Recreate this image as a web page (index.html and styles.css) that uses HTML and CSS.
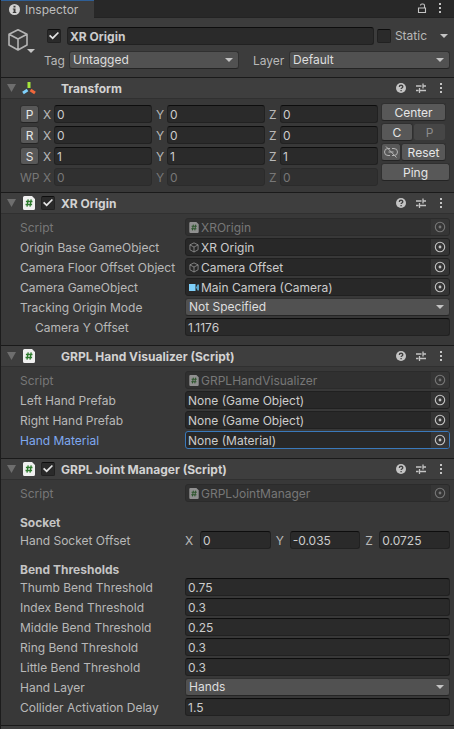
FILE: index.html
```html
<!DOCTYPE html>
<html lang="en">
<head>
<meta charset="utf-8">
<title>Inspector</title>
<link rel="stylesheet" href="styles.css">
</head>
<body>
<svg class="defs" aria-hidden="true">
  <symbol id="cube" viewBox="0 0 22 24"><path d="M11 1.8 20 6.2V17L11 22 2 17V6.2ZM2 6.2 11 11l9-4.8M11 11v11" fill="none" stroke="currentColor" stroke-width="1.600" stroke-linejoin="round"/></symbol>
  <symbol id="script" viewBox="0 0 12 14"><path d="M1.500 0H9l3 3v9.500a1.500 1.500 0 0 1-1.500 1.500h-9A1.500 1.500 0 0 1 0 12.500v-11A1.500 1.500 0 0 1 1.500 0Z" fill="#f0f0f0"/><path d="M5.200 3.300 4 10.700M8.200 3.300 7 10.700M2.900 5.500h6.600M2.500 8.500h6.600" fill="none" stroke="#2c7a2c" stroke-width="1.300"/></symbol>
  <symbol id="help" viewBox="0 0 10 10"><circle cx="5" cy="5" r="5" fill="currentColor"/><path d="M3.300 3.900c0-2.200 3.500-2.200 3.500-.1 0 1.200-1.700 1.200-1.700 2.300M5.100 7v1.200" fill="none" stroke="#3e3e3e" stroke-width="1.300"/></symbol>
  <symbol id="preset" viewBox="0 0 12 10"><path d="M1 3h5.500M8 3h3M8 .5v5M1 7.500h2.500M5 7.500h6M4.500 5v5" fill="none" stroke="currentColor" stroke-width="1.300"/></symbol>
  <symbol id="dots" viewBox="0 0 4 10"><path d="M1 0h2v2H1zM1 4h2v2H1zM1 8h2v2H1z" fill="currentColor"/></symbol>
  <symbol id="pick" viewBox="0 0 12 12"><circle cx="6" cy="6" r="4.700" fill="none" stroke="currentColor" stroke-width="1.100"/><circle cx="6" cy="6" r="1.400" fill="currentColor"/></symbol>
  <symbol id="camera" viewBox="0 0 10 10"><path d="M0 1.500h6.500v7H0z" fill="#7fd0fa"/><path d="M7 5 8.500 2H10v6H8.500Z" fill="#5aa5cc"/></symbol>
</svg>

<main class="panel">
  <nav class="tabs">
    <a class="tab" href="#inspector"><svg class="i11" viewBox="0 0 11 11"><circle cx="5.500" cy="5.500" r="5.500" fill="#d2d2d2"/><path d="M4.500 1.800h2v1.700h-2zM3.800 4.600h2.700v3.300h.8V9H3.800V7.900h.8V5.600h-.8Z" fill="#3c3c3c"/></svg>Inspector</a>
    <div class="tools tab-tools">
      <button class="tool" aria-label="Lock"><svg class="i10" viewBox="0 0 10 10"><path d="M1.500 5h7v4.500h-7ZM7.500 5V2.500a1.500 1.500 0 0 0-1.500-1.500H5a1.500 1.500 0 0 0-1.500 1.500" fill="none" stroke="currentColor" stroke-width="1.100"/></svg></button>
      <button class="tool" aria-label="Tab menu"><svg class="dots"><use href="#dots"/></svg></button>
    </div>
  </nav>

  <header class="object" id="inspector">
    <button class="object-icon" aria-label="Choose icon"><svg class="big-cube"><use href="#cube"/></svg></button>
    <div class="object-rows">
      <div class="object-row">
        <input class="check" type="checkbox" checked aria-label="Active">
        <input class="text name" type="text" value="XR Origin" aria-label="Name">
        <label class="static"><input class="check" type="checkbox">Static</label>
        <button class="static-menu" aria-label="Static flags"></button>
      </div>
      <div class="object-row tags">
        <label for="tag">Tag</label>
        <div class="drop tag-drop"><select id="tag"><option>Untagged</option></select></div>
        <label class="layer-label" for="layer">Layer</label>
        <div class="drop"><select id="layer"><option>Default</option></select></div>
      </div>
    </div>
  </header>

  <section>
    <div class="head">
      <button class="fold" aria-label="Collapse"></button>
      <svg class="head-icon axes" viewBox="0 0 14 14"><path d="M7 7V1" stroke="#a5e63c" stroke-width="3"/><path d="M5.500 9 1 12" stroke="#7fd0fa" stroke-width="3"/><path d="M8.500 9 13 12" stroke="#f0683c" stroke-width="3"/></svg>
      <h2>Transform</h2>
      <div class="tools"><button class="tool" aria-label="Help"><svg class="i10"><use href="#help"/></svg></button><button class="tool" aria-label="Presets"><svg class="preset"><use href="#preset"/></svg></button><button class="tool" aria-label="Menu"><svg class="dots"><use href="#dots"/></svg></button></div>
    </div>
    <div class="transform">
      <div class="vectors">
        <div class="vector"><button class="btn">P</button><label for="px">X</label><input class="text" id="px" value="0"><label for="py">Y</label><input class="text" id="py" value="0"><label for="pz">Z</label><input class="text" id="pz" value="0"></div>
        <div class="vector"><button class="btn">R</button><label for="rx">X</label><input class="text" id="rx" value="0"><label for="ry">Y</label><input class="text" id="ry" value="0"><label for="rz">Z</label><input class="text" id="rz" value="0"></div>
        <div class="vector"><button class="btn">S</button><label for="sx">X</label><input class="text" id="sx" value="1"><label for="sy">Y</label><input class="text" id="sy" value="1"><label for="sz">Z</label><input class="text" id="sz" value="1"></div>
        <div class="vector off"><span>WP</span><label for="wx">X</label><input class="text" id="wx" value="0" disabled><label for="wy">Y</label><input class="text" id="wy" value="0" disabled><label for="wz">Z</label><input class="text" id="wz" value="0" disabled></div>
      </div>
      <div class="actions">
        <div class="action"><button class="btn">Center</button></div>
        <div class="action halves"><button class="btn">C</button><button class="btn" disabled>P</button></div>
        <div class="action link"><button class="btn" aria-label="Unlink scale"><svg class="unlink" viewBox="0 0 14 12"><path d="M6 2.500H4a3.500 3.500 0 0 0 0 7h2M8 2.500h2a3.500 3.500 0 0 1 0 7H8M4.500 6h5M2 .5l10.500 11" fill="none" stroke="currentColor" stroke-width="1"/></svg></button><button class="btn">Reset</button></div>
        <div class="action wide"><button class="btn">Ping</button></div>
      </div>
    </div>
  </section>

  <section>
    <div class="head">
      <button class="fold" aria-label="Collapse"></button>
      <svg class="head-icon"><use href="#script"/></svg>
      <input class="check" type="checkbox" checked aria-label="Enable XR Origin">
      <h2>XR Origin</h2>
      <div class="tools"><button class="tool" aria-label="Help"><svg class="i10"><use href="#help"/></svg></button><button class="tool" aria-label="Presets"><svg class="preset"><use href="#preset"/></svg></button><button class="tool" aria-label="Menu"><svg class="dots"><use href="#dots"/></svg></button></div>
    </div>
    <div class="body">
      <div class="row off"><label for="o1">Script</label><div class="ref"><svg class="ref-icon"><use href="#script"/></svg><input id="o1" value="XROrigin" disabled><button aria-label="Select" disabled><svg class="pick"><use href="#pick"/></svg></button></div></div>
      <div class="row"><label for="o2">Origin Base GameObject</label><div class="ref"><svg class="ref-icon"><use href="#cube"/></svg><input id="o2" value="XR Origin" readonly><button aria-label="Select"><svg class="pick"><use href="#pick"/></svg></button></div></div>
      <div class="row"><label for="o3">Camera Floor Offset Object</label><div class="ref"><svg class="ref-icon"><use href="#cube"/></svg><input id="o3" value="Camera Offset" readonly><button aria-label="Select"><svg class="pick"><use href="#pick"/></svg></button></div></div>
      <div class="row"><label for="o4">Camera GameObject</label><div class="ref"><svg class="ref-icon"><use href="#camera"/></svg><input id="o4" value="Main Camera (Camera)" readonly><button aria-label="Select"><svg class="pick"><use href="#pick"/></svg></button></div></div>
      <div class="row"><label for="o5">Tracking Origin Mode</label><div class="drop"><select id="o5"><option>Not Specified</option></select></div></div>
      <div class="row"><label class="nested" for="o6">Camera Y Offset</label><input class="text" id="o6" value="1.1176"></div>
    </div>
  </section>

  <section>
    <div class="head">
      <button class="fold" aria-label="Collapse"></button>
      <svg class="head-icon"><use href="#script"/></svg>
      <h2>GRPL Hand Visualizer (Script)</h2>
      <div class="tools"><button class="tool" aria-label="Help"><svg class="i10"><use href="#help"/></svg></button><button class="tool" aria-label="Presets"><svg class="preset"><use href="#preset"/></svg></button><button class="tool" aria-label="Menu"><svg class="dots"><use href="#dots"/></svg></button></div>
    </div>
    <div class="body">
      <div class="row off"><label for="h1">Script</label><div class="ref"><svg class="ref-icon"><use href="#script"/></svg><input id="h1" value="GRPLHandVisualizer" disabled><button aria-label="Select" disabled><svg class="pick"><use href="#pick"/></svg></button></div></div>
      <div class="row"><label for="h2">Left Hand Prefab</label><div class="ref"><input id="h2" value="None (Game Object)" readonly><button aria-label="Select"><svg class="pick"><use href="#pick"/></svg></button></div></div>
      <div class="row"><label for="h3">Right Hand Prefab</label><div class="ref"><input id="h3" value="None (Game Object)" readonly><button aria-label="Select"><svg class="pick"><use href="#pick"/></svg></button></div></div>
      <div class="row active"><label for="h4">Hand Material</label><div class="ref"><input id="h4" value="None (Material)" readonly><button aria-label="Select"><svg class="pick"><use href="#pick"/></svg></button></div></div>
    </div>
  </section>

  <section>
    <div class="head">
      <button class="fold" aria-label="Collapse"></button>
      <svg class="head-icon"><use href="#script"/></svg>
      <input class="check" type="checkbox" checked aria-label="Enable GRPL Joint Manager">
      <h2>GRPL Joint Manager (Script)</h2>
      <div class="tools"><button class="tool" aria-label="Help"><svg class="i10"><use href="#help"/></svg></button><button class="tool" aria-label="Presets"><svg class="preset"><use href="#preset"/></svg></button><button class="tool" aria-label="Menu"><svg class="dots"><use href="#dots"/></svg></button></div>
    </div>
    <div class="body">
      <div class="row off"><label for="j1">Script</label><div class="ref"><svg class="ref-icon"><use href="#script"/></svg><input id="j1" value="GRPLJointManager" disabled><button aria-label="Select" disabled><svg class="pick"><use href="#pick"/></svg></button></div></div>
      <h3>Socket</h3>
      <div class="row"><span class="label">Hand Socket Offset</span><div class="triple"><label for="jx">X</label><input class="text" id="jx" value="0"><label for="jy">Y</label><input class="text" id="jy" value="-0.035"><label for="jz">Z</label><input class="text" id="jz" value="0.0725"></div></div>
      <h3>Bend Thresholds</h3>
      <div class="row"><label for="b1">Thumb Bend Threshold</label><input class="text" id="b1" value="0.75"></div>
      <div class="row"><label for="b2">Index Bend Threshold</label><input class="text" id="b2" value="0.3"></div>
      <div class="row"><label for="b3">Middle Bend Threshold</label><input class="text" id="b3" value="0.25"></div>
      <div class="row"><label for="b4">Ring Bend Threshold</label><input class="text" id="b4" value="0.3"></div>
      <div class="row"><label for="b5">Little Bend Threshold</label><input class="text" id="b5" value="0.3"></div>
      <div class="row"><label for="b6">Hand Layer</label><div class="drop"><select id="b6"><option>Hands</option></select></div></div>
      <div class="row"><label for="b7">Collider Activation Delay</label><input class="text" id="b7" value="1.5"></div>
    </div>
  </section>
  <div class="end"></div>
</main>
</body>
</html>
```
FILE: styles.css
```css
* { box-sizing: border-box; }

body {
  margin: 0;
  background: #383838;
  color: #b8b8b8;
  font: 12px/18px Inter, "Liberation Sans", sans-serif;
}

button, input, select {
  margin: 0;
  padding: 0;
  border: 0;
  background: none;
  color: inherit;
  font: inherit;
  min-width: 0;
  outline: 0;
}

svg { display: block; flex: none; }
.defs { position: absolute; width: 0; height: 0; }

.panel {
  display: flex;
  flex-direction: column;
  min-height: 100vh;
  border-left: 1px solid #1c1c1c;
}

/* Tab bar */
.tabs {
  display: flex;
  justify-content: space-between;
  height: 18px;
  background: #282828;
  box-shadow: inset 0 -1px #232323;
}
.tab {
  display: flex;
  align-items: center;
  gap: 5px;
  width: 93px;
  padding-left: 8px;
  border-top: 1px solid #2f5f96;
  background: #3c3c3c;
  color: #bebebe;
  text-decoration: none;
}
.i10 { width: 10px; height: 10px; }
.i11 { width: 11px; height: 11px; }
.preset { width: 12px; height: 10px; }
.dots { width: 4px; height: 10px; }
.pick { width: 12px; height: 12px; }
.unlink { width: 14px; height: 12px; }

.tools { display: flex; align-items: center; margin-left: auto; padding-right: 3px; color: #c4c4c4; }
.tool { display: grid; place-items: center; width: 20px; height: 18px; }
.tab-tools .tool { width: 18px; height: 16px; }
.tab-tools { align-items: flex-start; padding-right: 5px; }

/* Game object header */
.object {
  display: flex;
  gap: 8px;
  padding: 9px 4px 8px 6px;
  background: #3c3c3c;
}
.object-icon {
  position: relative;
  width: 24px;
  height: 26px;
  color: #b4b4b4;
}
.big-cube { width: 22px; height: 24px; }
.object-icon::after,
.static-menu::after,
.drop::after {
  content: "";
  width: 8px;
  height: 4px;
  background: #c4c4c4;
  clip-path: polygon(0 0, 100% 0, 50% 100%);
}
.object-icon::after { position: absolute; left: 20px; top: 22px; }
.object-rows { flex: 1; display: grid; gap: 6px; padding-left: 5px; }
.object-row { display: flex; align-items: center; padding-left: 3px; }
.object-row.tags { padding-left: 0; }
.tags > label { width: 25px; line-height: 20px; height: 18px; }
.tags > .layer-label { width: 36px; margin-left: 14px; }
.tags .drop { flex: 161; }
.tags .tag-drop { flex: 170; }
.name { flex: 1; margin: 0 3px 0 6px; font-weight: 700; }
.static { display: flex; align-items: center; gap: 4px; }
.static-menu { display: grid; place-items: center; width: 12px; height: 18px; margin-left: 11px; }

/* Shared controls */
.check {
  appearance: none;
  display: grid;
  place-items: center;
  flex: none;
  width: 14px;
  height: 14px;
  border: 1px solid #212121;
  border-top-color: #0d0d0d;
  border-radius: 2px;
  background: #2a2a2a;
}
.check:checked::before {
  content: "";
  width: 10px;
  height: 8px;
  background: #e4e4e4;
  clip-path: polygon(0 50%, 12% 34%, 36% 64%, 88% 0, 100% 12%, 37% 94%);
}
.text {
  width: 100%;
  height: 18px;
  padding: 1px 2px 0;
  border: 1px solid #212121;
  border-top-color: #0d0d0d;
  border-radius: 3px;
  background: #2a2a2a;
  color: #cccccc;
}
.text.name { width: auto; }
.drop { position: relative; min-width: 0; }
.drop::after { position: absolute; right: 6px; top: 7px; pointer-events: none; }
.drop select {
  appearance: none;
  display: block;
  width: 100%;
  height: 18px;
  padding: 0 18px 0 3px;
  border: 1px solid #303030;
  border-bottom-color: #242424;
  border-radius: 3px;
  background: #515151;
  color: #dedede;
  line-height: 16px;
}
.btn {
  height: 18px;
  padding-top: 1px;
  border: 1px solid #303030;
  border-bottom-color: #242424;
  border-radius: 3px;
  background: #585858;
  color: #e6e6e6;
  line-height: 16px;
}

/* Component header */
.head {
  display: flex;
  align-items: center;
  height: 22px;
  padding-left: 6px;
  border-top: 1px solid #1a1a1a;
  border-bottom: 1px solid #303030;
  background: #3e3e3e;
}
.fold {
  width: 9px;
  height: 8px;
  background: #6e6e6e;
  clip-path: polygon(0 0, 100% 0, 50% 100%);
}
.head-icon { width: 12px; height: 14px; margin: 0 6px 0 7px; }
.head-icon.axes { width: 14px; height: 14px; margin: 0 5px 0 6px; }
.head h2 {
  height: 18px;
  margin: 0 0 0 20px;
  color: #d2d2d2;
  font-size: 12px;
  line-height: 20px;
  font-weight: 700;
}
.head .check + h2 { margin-left: 6px; }

/* Transform */
.transform { display: flex; gap: 3px; padding: 4px 4px 6px 19px; }
.vectors { flex: 1; display: grid; gap: 3px; padding-top: 2px; }
.vector {
  display: grid;
  grid-template-columns: 23px 11px 1fr 15px 1fr 15px 1fr;
  line-height: 20px;
  height: 18px;
}
.vector .btn { width: 19px; }
.vector label ~ label { padding-left: 4px; }
.actions { width: 69px; display: grid; gap: 2px; align-content: start; }
.action { display: grid; width: 65px; }
.action.wide { width: 69px; }
.halves { grid-template-columns: 32px 1fr; }
.link { grid-template-columns: 20px 1fr; }
.link .btn:first-child { display: grid; place-items: center; padding: 0; color: #b4b4b4; }
.btn:disabled { background: #464646; border-color: #383838; color: #8c8c8c; }

/* Property rows */
.body { display: grid; gap: 2px; padding: 4px 4px 9px 19px; }
.row { display: grid; grid-template-columns: 165px 1fr; height: 18px; }
.row > label, .row > .label { line-height: 20px; white-space: nowrap; }
.row > .nested { padding-left: 15px; }
.body h3 {
  margin: 0;
  padding-top: 10px;
  height: 25px;
  color: #c4c4c4;
  font-size: 12px;
  line-height: 18px;
  font-weight: 700;
}
.ref {
  display: flex;
  align-items: center;
  height: 18px;
  border: 1px solid #202020;
  border-radius: 3px;
  background: #282828;
  color: #cccccc;
  overflow: hidden;
}
.ref input { flex: 1; height: 16px; padding: 1px 0 0 2px; }
.ref-icon { width: 10px; height: 11px; margin-left: 3px; color: #a0a0a0; }
.ref button { display: grid; place-items: center; width: 18px; height: 16px; background: #353535; color: #c4c4c4; }
.active label { color: #7fa8f0; }
.active .ref { border-color: #3a79bb; }
.triple {
  display: grid;
  grid-template-columns: 15px 1fr 19px 1fr 19px 1fr;
  line-height: 20px;
}
.triple label ~ label { padding-left: 5px; }

/* Disabled rows */
.off { color: #777777; }
.off .text, .off .ref { border-color: #2b2b2b; background: #303030; color: #777777; }
.off .ref button { background: #363636; color: #777777; }
.off .ref-icon { opacity: .5; }

.end { flex: 1; border-top: 1px solid #1a1a1a; background: #3e3e3e; }
```
